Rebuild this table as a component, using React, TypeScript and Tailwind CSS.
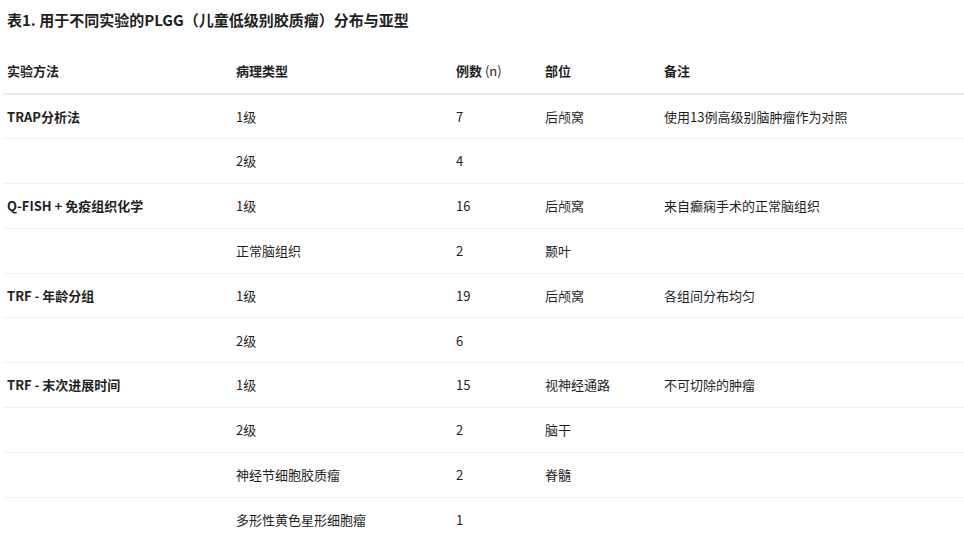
const rows: [string, string, string, string, string][] = [
  ["TRAP分析法", "1级", "7", "后颅窝", "使用13例高级别脑肿瘤作为对照"],
  ["", "2级", "4", "", ""],
  ["Q-FISH + 免疫组织化学", "1级", "16", "后颅窝", "来自癫痫手术的正常脑组织"],
  ["", "正常脑组织", "2", "颞叶", ""],
  ["TRF - 年龄分组", "1级", "19", "后颅窝", "各组间分布均匀"],
  ["", "2级", "6", "", ""],
  ["TRF - 末次进展时间", "1级", "15", "视神经通路", "不可切除的肿瘤"],
  ["", "2级", "2", "脑干", ""],
  ["", "神经节细胞胶质瘤", "2", "脊髓", ""],
  ["", "多形性黄色星形细胞瘤", "1", "", ""],
];

export default function App() {
  return (
    <div className="min-h-screen bg-white text-[#1f1f1f] font-['Segoe_UI','Noto_Sans_CJK_SC',sans-serif]">
      <h1 className="pl-[7px] pt-[9px] text-[15px] font-bold leading-[22px]">
        表1. 用于不同实验的PLGG（儿童低级别胶质瘤）分布与亚型
      </h1>
      <table className="ml-[3px] mt-[18px] w-[961px] table-fixed border-collapse text-[13px]">
        <colgroup>
          <col className="w-[229px]" />
          <col className="w-[220px]" />
          <col className="w-[89px]" />
          <col className="w-[119px]" />
          <col />
        </colgroup>
        <thead>
          <tr className="h-[45px] border-b-2 border-[#ececec] text-left">
            <th className="px-1 font-bold">实验方法</th>
            <th className="px-1 font-bold">病理类型</th>
            <th className="px-1 font-bold">
              例数 <span className="font-normal">(n)</span>
            </th>
            <th className="px-1 font-bold">部位</th>
            <th className="px-1 font-bold">备注</th>
          </tr>
        </thead>
        <tbody>
          {rows.map((r, i) => (
            <tr key={i} className="h-[44.8px] border-b border-[#f0f0f0]">
              <td className="px-1 py-0 font-bold">{r[0]}</td>
              <td className="px-1 py-0">{r[1]}</td>
              <td className="px-1 py-0">{r[2]}</td>
              <td className="px-1 py-0">{r[3]}</td>
              <td className="px-1 py-0">{r[4]}</td>
            </tr>
          ))}
        </tbody>
      </table>
    </div>
  );
}
